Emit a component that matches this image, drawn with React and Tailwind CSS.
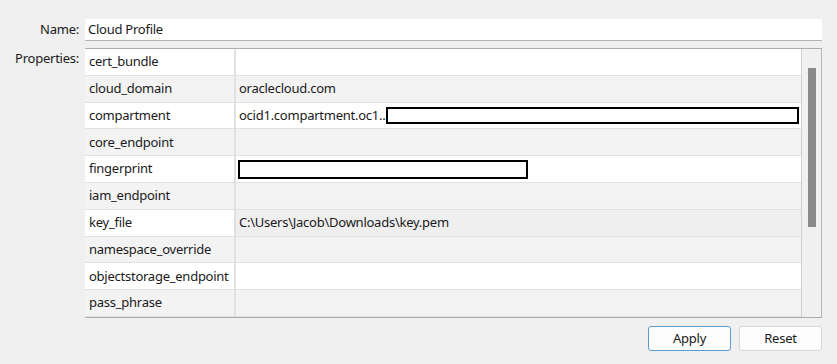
import React from "react";

const rows = [
  { key: "cert_bundle", value: "", shade: false },
  { key: "cloud_domain", value: "oraclecloud.com", shade: true },
  { key: "compartment", value: "ocid1.compartment.oc1..", shade: false, redact: "long" },
  { key: "core_endpoint", value: "", shade: true },
  { key: "fingerprint", value: "", shade: false, redact: "short" },
  { key: "iam_endpoint", value: "", shade: true },
  { key: "key_file", value: "C:\\Users\\Jacob\\Downloads\\key.pem", shade: false, selected: true },
  { key: "namespace_override", value: "", shade: true },
  { key: "objectstorage_endpoint", value: "", shade: false },
  { key: "pass_phrase", value: "", shade: true },
];

function Row({ row }) {
  const bg = row.shade ? "bg-[#f3f3f3]" : "bg-white";
  const valueBg = row.selected ? "bg-[#efefef]" : bg;
  return (
    <div className="flex h-[26.8px] border-b border-[#e1e1e1]">
      <div className={`w-[151px] shrink-0 flex items-center pl-[4px] border-r-2 border-[#e1e1e1] whitespace-nowrap overflow-hidden ${bg}`}>
        {row.key}
      </div>
      <div className={`flex-1 flex items-center pl-[3px] pr-[2px] ${valueBg}`}>
        {row.value && <span className="whitespace-nowrap">{row.value}</span>}
        {row.redact === "long" && (
          <div className="flex-1 h-[17px] border-2 border-black bg-white ml-[1px]"></div>
        )}
        {row.redact === "short" && (
          <div className="w-[290px] h-[19px] border-2 border-black bg-white -ml-[1px]"></div>
        )}
      </div>
    </div>
  );
}

export default function App() {
  return (
    <div
      className="w-[837px] h-[364px] bg-[#f0f0f0] text-[13px] tracking-[-0.25px] text-[#1a1a1a] pt-[19px] pr-[15px]"
      style={{ fontFamily: '"Noto Sans", "Open Sans", sans-serif' }}
    >
      <div className="flex items-center">
        <div className="w-[85px] shrink-0 text-right pr-[6px]">Name:</div>
        <div className="flex-1 h-[22px] bg-white border-b border-[#b4b4b4] flex items-center pl-[3px]">
          Cloud Profile
        </div>
      </div>

      <div className="flex mt-[7px]">
        <div className="w-[85px] shrink-0 text-right pr-[6px] pt-[1px]">Properties:</div>
        <div className="flex-1 flex border-t border-[#acacac] border-r border-r-[#b8b8b8] border-b border-b-[#acacac]">
          <div className="flex-1 flex flex-col">
            {rows.map((r) => (
              <Row key={r.key} row={r} />
            ))}
          </div>
          <div className="w-[20px] shrink-0 bg-[#f0f0f0] border-l border-[#d0d0d0] pt-[19px] pl-[6px]">
            <div className="w-[8px] h-[159px] bg-[#8a8a8a]"></div>
          </div>
        </div>
      </div>

      <div className="flex justify-end gap-[8px] mt-[8px]">
        <button className="w-[83px] h-[25px] bg-[#fdfdfd] border border-[#5b9bd5] rounded-[3px] text-[13px] leading-none">
          Apply
        </button>
        <button className="w-[83px] h-[25px] bg-[#fdfdfd] border border-[#d6d6d6] rounded-[3px] text-[13px] leading-none">
          Reset
        </button>
      </div>
    </div>
  );
}
